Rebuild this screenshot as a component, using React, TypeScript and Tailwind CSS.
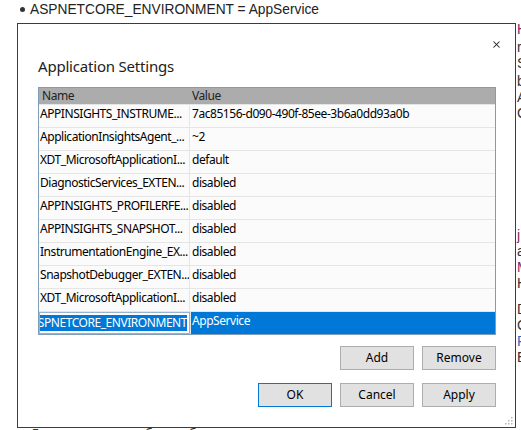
import { X } from "lucide-react";

const rows: [string, string][] = [
  ["APPINSIGHTS_INSTRUME...", "7ac85156-d090-490f-85ee-3b6a0dd93a0b"],
  ["ApplicationInsightsAgent_...", "~2"],
  ["XDT_MicrosoftApplicationI...", "default"],
  ["DiagnosticServices_EXTEN...", "disabled"],
  ["APPINSIGHTS_PROFILERFE...", "disabled"],
  ["APPINSIGHTS_SNAPSHOT...", "disabled"],
  ["InstrumentationEngine_EX...", "disabled"],
  ["SnapshotDebugger_EXTEN...", "disabled"],
  ["XDT_MicrosoftApplicationI...", "disabled"],
];

// letters of the page that peek out to the right of the dialog
const edge: [string, string, number][] = [
  ["H", "text-[#7a2a6b]", 22],
  ["r", "text-[#333]", 40],
  ["S", "text-[#333]", 56],
  ["b", "text-[#333]", 74],
  ["A", "text-[#333]", 90],
  ["C", "text-[#333]", 106],
  ["j", "text-[#7a2a6b]", 228],
  ["a", "text-[#333]", 244],
  ["M", "text-[#7a2a6b]", 260],
  ["H", "text-[#333]", 276],
  ["D", "text-[#333]", 302],
  ["C", "text-[#333]", 318],
  ["P", "text-[#2a64c5]", 334],
  ["E", "text-[#333]", 350],
];

function Btn({ label, primary = false }: { label: string; primary?: boolean }) {
  return (
    <button
      className={`w-[74px] h-[24px] bg-[#e1e1e1] border text-[12px] text-black leading-none ${
        primary ? "border-[#0078d7]" : "border-[#adadad]"
      }`}
    >
      {label}
    </button>
  );
}

export default function App() {
  return (
    <div className="relative w-[521px] h-[430px] overflow-hidden bg-white font-['Liberation_Sans',Arial,sans-serif] text-[#222]">
      <div className="flex items-center gap-[5px] pl-[20px] pt-[1px] text-[13.75px] leading-[17px]">
        <span className="w-[5px] h-[5px] rounded-full bg-[#333]" />
        <span>ASPNETCORE_ENVIRONMENT = AppService</span>
      </div>

      <div className="absolute left-[517px] top-0 w-[12px] text-[14px] leading-[15px]">
        {edge.map(([ch, color, y], i) => (
          <span key={i} className={`absolute left-0 ${color}`} style={{ top: y }}>
            {ch}
          </span>
        ))}
      </div>

      <div className="absolute left-[30px] top-[424px] text-[14px] text-[#333] whitespace-nowrap">
        Для запуска службы требуется перезапуск
      </div>

      {/* dialog */}
      <div className="absolute left-[17px] top-[23px] w-[499px] h-[405px] border border-[#283c70] bg-white font-['Noto_Sans',sans-serif] text-black">
        <div className="flex justify-end pt-[15px] pr-[13px]">
          <X size={11} strokeWidth={2.2} className="text-[#222]" />
        </div>
        <div className="pl-[20px] pr-[19px]">
          <div className="mt-[6px] text-[15px] leading-[20px] text-[#222] tracking-[-0.2px]">Application Settings</div>

          <div className="mt-[11px] border border-[#7f9db9] bg-[#fbfbfb] text-[12px] leading-[16px] tracking-[-0.45px]">
            <div className="flex h-[16px] bg-[#acacac] text-[#222]">
              <div className="w-[151px] pl-[3px]">Name</div>
              <div className="flex-1 pl-[2px]">Value</div>
            </div>
            {rows.map(([name, value], i) => (
              <div key={i} className="flex h-[23px] border-t border-[#e5e5e5] pt-[1px]">
                <div className="w-[151px] pl-[1px] whitespace-nowrap overflow-hidden border-r border-[#e5e5e5] -mt-[1px] pt-[1px]">
                  {name}
                </div>
                <div className="flex-1 pl-[2px] whitespace-nowrap overflow-hidden">{value}</div>
              </div>
            ))}
            <div className="flex h-[23px] border-t border-[#e5e5e5] bg-[#0078d7] text-white">
              <div className="w-[151px] border border-[#9bb3d3] bg-white flex justify-end overflow-hidden pr-[2px]">
                <span className="h-[16px] mt-[2px] bg-[#0078d7] whitespace-nowrap">ASPNETCORE_ENVIRONMENT</span>
              </div>
              <div className="flex-1 pl-[1px] pt-[1px] border-l border-[#e5e5e5]">AppService</div>
            </div>
          </div>

          <div className="mt-[11px] flex justify-end gap-[8px]">
            <Btn label="Add" />
            <Btn label="Remove" />
          </div>
          <div className="mt-[13px] flex justify-end gap-[8px]">
            <Btn label="OK" primary />
            <Btn label="Cancel" />
            <Btn label="Apply" />
          </div>
        </div>

        <svg className="absolute right-[2px] bottom-[2px]" width="10" height="10" viewBox="0 0 10 10">
          {[
            [8, 2],
            [8, 5],
            [5, 5],
            [8, 8],
            [5, 8],
            [2, 8],
          ].map(([x, y], i) => (
            <rect key={i} x={x} y={y} width="1.5" height="1.5" fill="#b8b8b8" />
          ))}
        </svg>
      </div>
    </div>
  );
}
